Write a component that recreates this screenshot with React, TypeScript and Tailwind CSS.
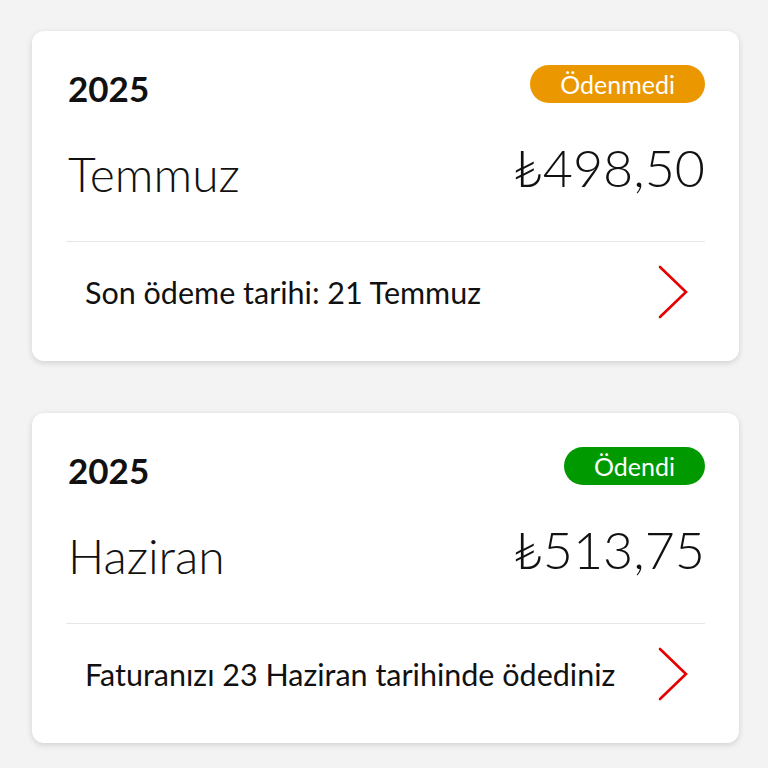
type Bill = {
  year: string;
  month: string;
  amount: string;
  status: "paid" | "unpaid";
  note: string;
};

const BILLS: Bill[] = [
  {
    year: "2025",
    month: "Temmuz",
    amount: "₺498,50",
    status: "unpaid",
    note: "Son ödeme tarihi: 21 Temmuz",
  },
  {
    year: "2025",
    month: "Haziran",
    amount: "₺513,75",
    status: "paid",
    note: "Faturanızı 23 Haziran tarihinde ödediniz",
  },
];

function Chevron() {
  return (
    <svg width="32" height="54" viewBox="0 0 32 54" fill="none">
      <path d="M3 2 L29 27 L3 52" stroke="#e60000" strokeWidth="2.6" strokeLinecap="round" strokeLinejoin="miter" />
    </svg>
  );
}

function BillCard({ bill }: { bill: Bill }) {
  const paid = bill.status === "paid";
  return (
    <div className="h-[330px] rounded-xl bg-white px-[34px] shadow-[0_2px_6px_rgba(0,0,0,0.14)]">
      {/* header: year, month, badge, amount */}
      <div className="h-[210px] pt-[34px]">
        <div className="flex h-[38px] items-start justify-between">
          <span className="mt-[6px] ml-[2px] text-[35px] font-bold leading-none">{bill.year}</span>
          <span
            className={`flex h-[38px] items-center rounded-full px-[30px] text-[25px] leading-none text-white ${
              paid ? "bg-[#009900]" : "bg-[#eb9700]"
            }`}
          >
            {paid ? "Ödendi" : "Ödenmedi"}
          </span>
        </div>
        <div className="flex items-start justify-between">
          <span className="mt-[47px] ml-[2px] text-[48px] font-light leading-none">{bill.month}</span>
          <span className="mt-[38px] text-[52px] font-light leading-none">{bill.amount}</span>
        </div>
      </div>
      <div className="border-t border-[#e6e6e6]" />
      {/* footer */}
      <div className="flex h-[100px] items-center justify-between pl-[19px] pr-[16px]">
        <span className="text-[30.5px] leading-none">{bill.note}</span>
        <Chevron />
      </div>
    </div>
  );
}

export default function App() {
  return (
    <div className="min-h-screen bg-[#f3f3f3] pl-[32px] pr-[29px] pt-[31px] text-[#111] font-['Lato',sans-serif]">
      <div className="flex flex-col gap-[52px]">
        {BILLS.map((b, i) => (
          <BillCard key={i} bill={b} />
        ))}
      </div>
    </div>
  );
}
